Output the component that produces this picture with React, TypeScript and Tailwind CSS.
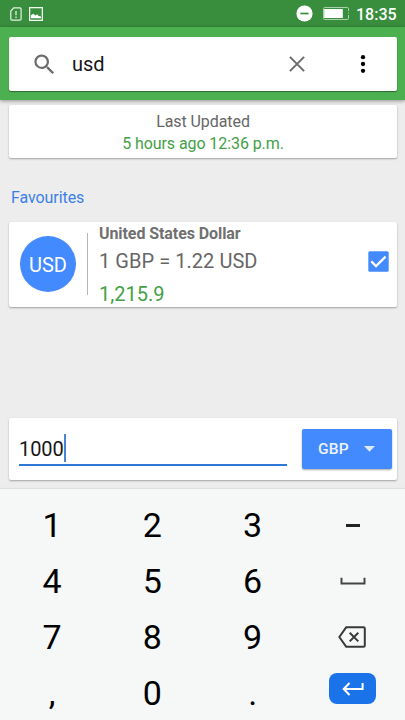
import type { ReactNode } from "react";

function StatusBar() {
  return (
    <div className="flex h-[27px] items-center bg-[#388e3c] pl-[10px] pr-[8px] text-white">
      <svg width="12" height="14" viewBox="0 0 12 14" fill="none" stroke="#e4f3e5" strokeWidth="1.2">
        <path d="M3.7.8h6.2q1.2 0 1.2 1.2v10q0 1.2-1.2 1.2H2Q.8 13.200.8 12V4z" />
        <path d="M6 4v4.200M6 9.500v1.400" strokeWidth="1.300" />
      </svg>
      <svg className="ml-[7px]" width="14" height="14" viewBox="0 0 14 14" fill="none">
        <rect x=".65" y=".65" width="12.700" height="12.700" stroke="#eef8ef" strokeWidth="1.300" />
        <path d="M2 11.200V8.300l2.300-1.600 2 1.900 2-1.300 1.300 1.800 2.400.4v1.700z" fill="#fff" />
      </svg>
      <svg className="ml-auto" width="17" height="17" viewBox="0 0 17 17">
        <circle cx="8.500" cy="8.500" r="8.100" fill="#fff" />
        <path d="M4.400 8.500h8.200" stroke="#388e3c" strokeWidth="1.700" />
      </svg>
      <svg className="ml-[10px]" width="26" height="13" viewBox="0 0 26 13" fill="none">
        <rect x=".5" y=".5" width="25" height="12" rx="1.300" stroke="#a9d3ab" />
        <path d="M25.500 4v5" stroke="#388e3c" strokeWidth="1" strokeDasharray="1.500 1" />
        <rect x="1.200" y="2" width="18.600" height="9" fill="#fff" />
      </svg>
      <span className="ml-[7.500px] w-[41px] whitespace-nowrap pt-[2px] text-base leading-[20px] font-medium">18:35</span>
    </div>
  );
}

function SearchBar() {
  return (
    <header className="relative h-[73px] bg-[#4caf50] px-[9px] pt-[10px] shadow-[0_1px_4px_rgba(0,0,0,0.4)]">
      <div className="flex h-[54px] w-[388px] items-center rounded-[2px] bg-white shadow-[0_1px_1px_rgba(0,0,0,0.4)]">
        <svg className="ml-[22px]" width="27" height="27" viewBox="0 0 24 24" fill="#6b6b6b">
          <path d="M15.500 14h-.79l-.28-.27A6.471 6.471 0 0 0 16 9.500 6.500 6.500 0 1 0 9.500 16c1.610 0 3.090-.59 4.230-1.570l.27.280v.790l5 4.990L20.490 19l-4.990-5zm-6 0C7.010 14 5 11.990 5 9.500S7.010 5 9.500 5 14 7.010 14 9.500 11.990 14 9.500 14z" />
        </svg>
        <span className="ml-[14px] text-xl text-[#161616]">usd</span>
        <svg className="ml-auto" width="16" height="16" viewBox="0 0 16 16" stroke="#6b6b6b" strokeWidth="2">
          <path d="M.9.900l14.200 14.200M15.100.900L.9 15.100" />
        </svg>
        <svg className="mr-[31.500px] ml-[54.500px]" width="6" height="18" viewBox="0 0 6 18" fill="#000">
          <circle cx="3" cy="2.200" r="2.150" />
          <circle cx="3" cy="9" r="2.150" />
          <circle cx="3" cy="15.800" r="2.150" />
        </svg>
      </div>
    </header>
  );
}

function Card({ className, children }: { className: string; children: ReactNode }) {
  return (
    <section className={`ml-[9px] w-[388px] rounded-[2px] bg-white shadow-[0_1px_2px_rgba(0,0,0,0.32)] ${className}`}>
      {children}
    </section>
  );
}

function CurrencyCard() {
  return (
    <Card className="mt-[13px] flex h-[85px]">
      <div className="mt-[14px] ml-[11px] flex size-[56px] shrink-0 items-center justify-center rounded-full bg-[#448aff] text-xl text-white">
        <span className="pt-[2px]">USD</span>
      </div>
      <div className="mt-[11px] ml-[11px] h-[62px] w-px bg-[#b5b5b5]" />
      <div className="ml-[11px] flex flex-col text-[#666]">
        <span className="mt-px text-base leading-[22px] font-bold tracking-[-0.08px] text-[#707070]">United States Dollar</span>
        <span className="mt-[3px] text-xl leading-[26px] tracking-[0.05px]">1 GBP = 1.22 USD</span>
        <span className="mt-[7px] text-xl leading-[26px] text-[#43a047]">1,215.9</span>
      </div>
      <svg className="mt-[29px] mr-[8px] ml-auto" width="21" height="21" viewBox="0 0 21 21" fill="none">
        <rect x=".3" y=".3" width="20.400" height="20.400" rx="1.500" fill="#448aff" />
        <path d="M3.300 10.400l4.700 4.700L17.600 5.600" stroke="#fff" strokeWidth="2.200" />
      </svg>
    </Card>
  );
}

function AmountCard() {
  return (
    <Card className="mt-[111px] flex h-[62px]">
      <div className="mt-[16px] ml-[10px] flex h-[32px] w-[268px] border-b-2 border-[#2f78d8]">
        <span className="text-xl leading-[31px] tracking-[-0.1px] text-[#161616]">1000</span>
        <span className="h-[28px] w-[2px] bg-[#4c84d4]" />
      </div>
      <button className="mt-[11px] ml-[15px] flex h-[40px] w-[90px] items-center rounded-[2px] bg-[#448aff] pl-[16px] text-white shadow-[0_1px_2px_rgba(0,0,0,0.35)]">
        <span className="pt-px text-[15.500px] font-medium tracking-[0.200px] text-[#edf4ff]">GBP</span>
        <svg className="mr-[17px] ml-auto" width="11" height="6" viewBox="0 0 11 6">
          <path d="M0 0h11L5.500 5.800z" fill="#dce9ff" />
        </svg>
      </button>
    </Card>
  );
}

function SpaceIcon() {
  return (
    <svg width="26" height="8" viewBox="0 0 26 8" fill="none" stroke="#444" strokeWidth="2">
      <path d="M1.500.800v5.700h23V.8" />
    </svg>
  );
}

function BackspaceIcon() {
  return (
    <svg className="-ml-px" width="28" height="22" viewBox="0 0 28 22" fill="none" stroke="#383838" strokeWidth="2">
      <path d="M8.300 1.200h17.200q1.300 0 1.300 1.300v17q0 1.300-1.300 1.300H8.300L1.300 11z" strokeLinejoin="round" />
      <path d="M11.700 6.800l8.600 8.600M20.300 6.800l-8.600 8.600" />
    </svg>
  );
}

function EnterKey() {
  return (
    <span className="mb-[10px] flex h-[31px] w-[47px] items-center justify-center rounded-[8px] bg-[#1a73e8]">
      <svg className="mt-[2px]" width="22" height="14" viewBox="0 0 22 14" fill="none" stroke="#fff" strokeWidth="2">
        <path d="M20.600 1v6H2M7.500 1L1.700 7l5.800 6" />
      </svg>
    </span>
  );
}

function Keyboard() {
  const keys: ReactNode[] = [
    "1", "2", "3", <span className="mt-[1px] h-[3px] w-[14px] bg-[#222]" />,
    "4", "5", "6", <span className="mb-[1px]"><SpaceIcon /></span>,
    "7", "8", "9", <BackspaceIcon />,
    ",", "0", ".", <EnterKey />,
  ];
  return (
    <div className="mt-[9px] h-[231px] overflow-hidden bg-[#f6f8f8] pt-[8px] pl-[2px] shadow-[0_-1px_1px_rgba(0,0,0,0.06)]">
      <div className="grid w-[401px] grid-cols-4 grid-rows-[repeat(4,56px)] text-[34px] leading-none text-black">
        {keys.map((key, index) => (
          <div key={index} className="flex items-center justify-center">{key}</div>
        ))}
      </div>
    </div>
  );
}

export default function App() {
  return (
    <main className="flex h-[720px] w-[405px] flex-col overflow-hidden bg-[#ededed] font-['Roboto',sans-serif]">
      <StatusBar />
      <SearchBar />
      <Card className="mt-[5px] h-[53px] pt-[6px] text-center text-base leading-[22px] tracking-[-0.08px] text-[#666]">
        <p>Last Updated</p>
        <p className="text-[#43a047]">5 hours ago 12:36 p.m.</p>
      </Card>
      <h2 className="mt-[29px] ml-[11px] text-base leading-[22px] tracking-[-0.08px] text-[#3b80e8]">Favourites</h2>
      <CurrencyCard />
      <AmountCard />
      <Keyboard />
    </main>
  );
}
